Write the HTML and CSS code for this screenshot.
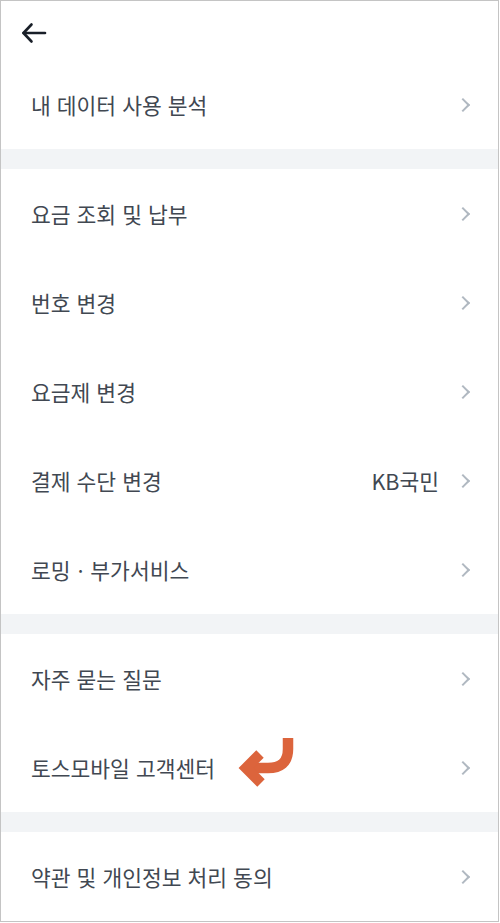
FILE: index.html
```html
<!DOCTYPE html>
<html lang="ko">
<head>
  <meta charset="UTF-8">
  <title>설정</title>
  <link rel="stylesheet" href="styles.css">
</head>
<body>
  <div class="screen">
    <div class="topbar">
      <button class="back-button" title="뒤로">
        <svg width="26" height="24" viewBox="0 0 26 24" fill="none" stroke="#191f28" stroke-width="2.6" stroke-linecap="round" stroke-linejoin="round">
          <path d="M24 12H2.5"/>
          <path d="M10.5 3.5L2.5 12L10.5 20.5"/>
        </svg>
      </button>
    </div>

    <div class="menu-group">
      <div class="menu-row">
        <span class="menu-label">내 데이터 사용 분석</span>
        <span class="chevron"></span>
      </div>
    </div>

    <div class="divider"></div>

    <div class="menu-group">
      <div class="menu-row">
        <span class="menu-label">요금 조회 및 납부</span>
        <span class="chevron"></span>
      </div>
      <div class="menu-row">
        <span class="menu-label">번호 변경</span>
        <span class="chevron"></span>
      </div>
      <div class="menu-row">
        <span class="menu-label">요금제 변경</span>
        <span class="chevron"></span>
      </div>
      <div class="menu-row">
        <span class="menu-label">결제 수단 변경</span>
        <span class="menu-value">KB국민</span>
        <span class="chevron"></span>
      </div>
      <div class="menu-row">
        <span class="menu-label">로밍ㆍ부가서비스</span>
        <span class="chevron"></span>
      </div>
    </div>

    <div class="divider"></div>

    <div class="menu-group">
      <div class="menu-row">
        <span class="menu-label">자주 묻는 질문</span>
        <span class="chevron"></span>
      </div>
      <div class="menu-row">
        <span class="menu-label">토스모바일 고객센터</span>
        <svg class="pointer-arrow" width="58" height="52" viewBox="0 0 58 52" fill="none" stroke="#dc643c" stroke-width="10.5">
          <path d="M50 1V12C50 26 42 31 30 31H10"/>
          <path d="M22 17L8 31L23 46" stroke-linejoin="miter"/>
        </svg>
        <span class="chevron"></span>
      </div>
    </div>

    <div class="divider"></div>

    <div class="menu-group">
      <div class="menu-row">
        <span class="menu-label">약관 및 개인정보 처리 동의</span>
        <span class="chevron"></span>
      </div>
    </div>
  </div>
</body>
</html>
```

FILE: styles.css
```css
body {
  margin: 0;
  background-color: white;
  font-family: 'Noto Sans CJK KR', 'Noto Sans', sans-serif;
}
.screen {
  width: 499px;
  height: 922px;
  box-sizing: border-box;
  border: 1px solid #c4c4c4;
  background-color: white;
  overflow: hidden;
}
.topbar {
  height: 59px;
  box-sizing: border-box;
  padding: 20px 0 0 20px;
}
.back-button {
  background: none;
  border: none;
  padding: 0;
  margin: 0;
  width: 26px;
  height: 24px;
  cursor: pointer;
  display: flex;
}
.divider {
  height: 20px;
  background-color: #f2f4f6;
}
.menu-row {
  position: relative;
  display: flex;
  align-items: center;
  height: 89px;
  padding: 0 28px 0 30px;
  color: #414852;
  font-size: 21.5px;
}
.menu-label {
  flex: 1;
}
.menu-value {
  margin-right: 19px;
}
.chevron {
  width: 8px;
  height: 8px;
  border-top: 2px solid #b0b8c1;
  border-right: 2px solid #b0b8c1;
  transform: rotate(45deg);
  margin-right: 2px;
}
.pointer-arrow {
  position: absolute;
  left: 237px;
  top: 14px;
}
```
